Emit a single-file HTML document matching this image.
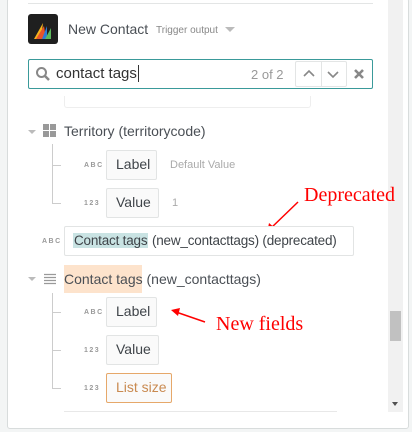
<!DOCTYPE html>
<html><head><meta charset="utf-8"><style>
*{box-sizing:border-box;margin:0;padding:0}
body{width:412px;height:432px;background:#f3f5f5;position:relative;overflow:hidden;font-family:"Liberation Sans",sans-serif;color:#4a4f55}
.panel{position:absolute;left:7px;top:-2px;width:402px;height:431px;background:#fff;border:1px solid #d8dcdc;border-radius:3px}
.a{position:absolute;white-space:nowrap}
.box{position:absolute;border:1px solid #e2e4e4;background:#fafafa;border-radius:2px;font-size:14px;color:#3f4449;padding-left:9px;line-height:27px;white-space:nowrap;overflow:hidden}
.t{position:absolute;font-size:7px;letter-spacing:1.5px;color:#999;font-weight:bold}
.vl{position:absolute;width:1px;background:#ccc}
.hl{position:absolute;height:1px;background:#ccc;width:9px}
.red{position:absolute;color:#f00;font-family:"Liberation Serif",serif;font-size:20px;white-space:nowrap}
</style></head><body>
<div class="panel"></div>
<div class="a" style="left:28px;top:3px;width:345px;height:1px;background:#e3e5e5"></div>
<div class="a" style="left:388px;top:0;width:15px;height:412px;background:#f1f1f1"></div>
<div class="a" style="left:390px;top:311px;width:11px;height:30px;background:#c1c1c1"></div>
<div class="a" style="left:392px;top:402px;width:0;height:0;border-left:3.5px solid transparent;border-right:3.5px solid transparent;border-top:4px solid #505050"></div>
<div class="a" style="left:28px;top:14px;width:30px;height:30px;background:#1f1f1f;border-radius:3px">
<svg width="30" height="30" viewBox="0 0 30 30"><path d="M6 25 L15 9 L13 25Z" fill="#f5b21c"/><path d="M8 25 L16 12 L18 25Z" fill="#e8542a"/><path d="M14 25 L19 12 L19 25Z" fill="#2d7bd8"/><path d="M17 25 L23 14 L23 25Z" fill="#5cb85c"/></svg></div>
<div class="a" style="left:68px;top:21px;font-size:14px;color:#4a4f55">New Contact</div>
<div class="a" style="left:156px;top:25px;font-size:10px;color:#888">Trigger output</div>
<div class="a" style="left:225px;top:27px;border-left:5px solid transparent;border-right:5px solid transparent;border-top:5px solid #bbb"></div>
<div class="a" style="left:28px;top:59px;width:345px;height:30px;border:1px solid #3a9a9a;border-radius:2px;background:#fff"></div>
<svg class="a" style="left:35px;top:66px" width="16" height="16" viewBox="0 0 16 16"><circle cx="6.5" cy="6.5" r="4.5" fill="none" stroke="#888" stroke-width="2"/><path d="M10 10 L14 14" stroke="#888" stroke-width="2.5"/></svg>
<div class="a" style="left:56px;top:65px;font-size:15px;color:#333">contact tags<span style="border-left:1px solid #333;margin-left:1px"></span></div>
<div class="a" style="left:251px;top:67px;font-size:13px;color:#999">2 of 2</div>
<div class="a" style="left:295px;top:61px;width:52px;height:26px;border:1px solid #e3e5e5;border-radius:2px"></div>
<div class="a" style="left:321px;top:61px;width:1px;height:26px;background:#e3e5e5"></div>
<svg class="a" style="left:301px;top:68px" width="40" height="12"><path d="M3 8 L8 3 L13 8" fill="none" stroke="#888" stroke-width="1.6"/><path d="M27 4 L32 9 L37 4" fill="none" stroke="#888" stroke-width="1.6"/></svg>
<svg class="a" style="left:354px;top:69px" width="10" height="10"><path d="M1 1 L9 9 M9 1 L1 9" stroke="#888" stroke-width="2.6"/></svg>
<div class="a" style="left:64px;top:96px;width:247px;height:12px;border:1px solid #eee;border-top:none;border-radius:0 0 3px 3px"></div>
<div class="a" style="left:28px;top:130px;border-left:4px solid transparent;border-right:4px solid transparent;border-top:4px solid #bbb"></div>
<svg class="a" style="left:43px;top:124px" width="14" height="14"><rect x="0" y="0" width="6" height="6" fill="#999"/><rect x="7" y="0" width="6" height="6" fill="#999"/><rect x="0" y="7" width="6" height="6" fill="#999"/><rect x="7" y="7" width="6" height="6" fill="#999"/></svg>
<div class="a" style="left:64px;top:123px;font-size:14px">Territory (territorycode)</div>
<div class="vl" style="left:52px;top:144px;height:59px"></div>
<div class="hl" style="left:52px;top:165px"></div><div class="hl" style="left:52px;top:203px"></div>
<div class="t" style="left:84px;top:162px">ABC</div>
<div class="box" style="left:106px;top:150px;width:51px;height:30px">Label</div>
<div class="a" style="left:170px;top:159px;font-size:11px;color:#aaa">Default Value</div>
<div class="t" style="left:84px;top:200px">123</div>
<div class="box" style="left:106px;top:188px;width:53px;height:30px">Value</div>
<div class="a" style="left:172px;top:197px;font-size:11px;color:#aaa">1</div>
<div class="red" style="left:304px;top:184px">Deprecated</div>
<svg class="a" style="left:260px;top:198px" width="45" height="40"><path d="M38 4 L10 31" stroke="#f00" stroke-width="1.5"/><path d="M7 35 L9 25 L16 31Z" fill="#f00"/></svg>
<div class="t" style="left:42px;top:238px">ABC</div>
<div class="box" style="left:64px;top:226px;width:290px;height:30px;padding-left:8px;background:#fff;font-size:13.5px;letter-spacing:-0.2px"><span style="background:#c9e3e3;padding:0 1px">Contact tags</span> (new_contacttags) (deprecated)</div>
<div class="a" style="left:28px;top:277px;border-left:4px solid transparent;border-right:4px solid transparent;border-top:4px solid #bbb"></div>
<svg class="a" style="left:44px;top:273px" width="12" height="12"><path d="M0 1.5H12M0 4.5H12M0 7.5H12M0 10.5H12" stroke="#999" stroke-width="1.2"/></svg>
<div class="a" style="left:64px;top:265px;width:78px;height:28px;background:#fde3cc"></div>
<div class="a" style="left:64px;top:271px;font-size:14px">Contact tags (new_contacttags)</div>
<div class="vl" style="left:52px;top:293px;height:96px"></div>
<div class="hl" style="left:52px;top:312px"></div><div class="hl" style="left:52px;top:350px"></div><div class="hl" style="left:52px;top:388px"></div>
<div class="t" style="left:84px;top:309px">ABC</div>
<div class="box" style="left:106px;top:297px;width:51px;height:30px">Label</div>
<div class="red" style="left:216px;top:313px">New fields</div>
<svg class="a" style="left:168px;top:305px" width="40" height="25"><path d="M37 17 L8 7" stroke="#f00" stroke-width="1.5"/><path d="M3 5 L12 3 L10 11Z" fill="#f00"/></svg>
<div class="t" style="left:84px;top:347px">123</div>
<div class="box" style="left:106px;top:335px;width:53px;height:30px">Value</div>
<div class="t" style="left:84px;top:385px">123</div>
<div class="box" style="left:106px;top:373px;width:66px;height:30px;border-color:#e6a86a;color:#c98a50">List size</div>
<div class="a" style="left:64px;top:411px;width:273px;height:1px;background:#e8e8e8"></div>
</body></html>
